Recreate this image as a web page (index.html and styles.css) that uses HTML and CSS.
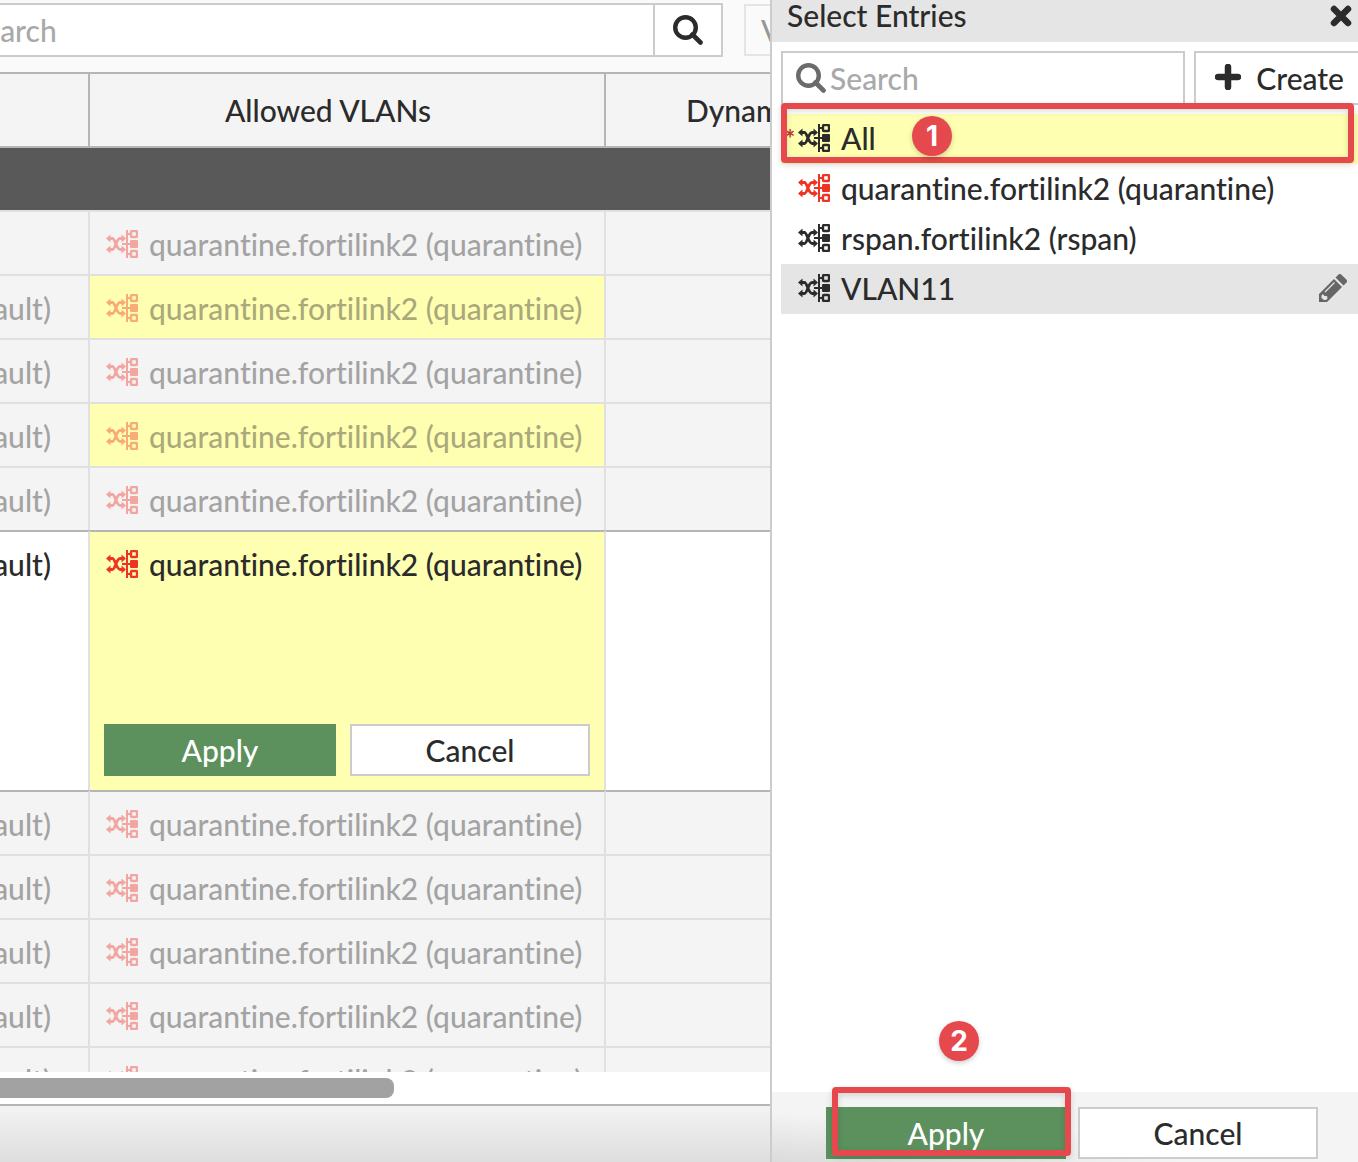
FILE: index.html
```html
<!DOCTYPE html>
<html lang="en">
<head>
    <meta charset="UTF-8">
    <meta name="viewport" content="width=device-width, initial-scale=1.0">
    <title>FortiSwitch Ports</title>
    <link rel="stylesheet" href="styles.css">
</head>
<body>
    <svg class="sprite" aria-hidden="true">
        <symbol id="icon-vlan" viewBox="0 0 32 28">
            <path d="M3 8.500h3.500C9 8.500 10.500 19.500 14 19.500h3M3 19.500h3.500C9 19.500 10.500 8.500 14 8.500h3" fill="none" stroke="currentColor" stroke-width="2.800"/>
            <path d="M0 8.500 4.500 4.500v8zM0 19.500 4.500 15.500v8zM20 8.500 15.500 4.500v8zM20 19.500 15.500 15.500v8z" fill="currentColor"/>
            <path d="M20 0h2v28h-2zM16 13h8v2h-8zM22 3h3v2h-3zM22 23h3v2h-3z" fill="currentColor"/>
            <rect x="25" y="1" width="6" height="6" rx="1" fill="none" stroke="currentColor" stroke-width="2.400"/>
            <rect x="24" y="10" width="8" height="8" rx="1" fill="currentColor"/>
            <rect x="25" y="21" width="6" height="6" rx="1" fill="none" stroke="currentColor" stroke-width="2.400"/>
        </symbol>
        <symbol id="icon-search" viewBox="0 0 30 30">
            <circle cx="12.500" cy="12.500" r="10.300" fill="none" stroke="currentColor" stroke-width="4.400"/>
            <path d="M19.500 19.500 27.500 27.500" stroke="currentColor" stroke-width="4.600" stroke-linecap="round"/>
        </symbol>
    </svg>

    <main class="ports">
        <div class="toolbar">
            <div class="search">
                <input type="text" placeholder="Search" aria-label="Search ports">
                <button type="button" aria-label="Search"><svg class="icon-search"><use href="#icon-search"/></svg></button>
            </div>
            <button type="button" class="view" disabled>View</button>
        </div>

        <div class="table-wrap">
            <table>
                <colgroup>
                    <col class="col-native">
                    <col class="col-allowed">
                    <col>
                </colgroup>
                <thead>
                    <tr>
                        <th></th>
                        <th class="allowed">Allowed VLANs</th>
                        <th class="dynamic">Dynamic VLAN</th>
                    </tr>
                </thead>
                <tbody>
                    <tr class="group"><td colspan="3"></td></tr>
                    <tr>
                        <td></td>
                        <td><div class="vlan"><svg class="icon-vlan"><use href="#icon-vlan"/></svg>quarantine.fortilink2 (quarantine)</div></td>
                        <td></td>
                    </tr>
                    <tr>
                        <td><div class="native">(default)</div></td>
                        <td class="changed"><div class="vlan"><svg class="icon-vlan"><use href="#icon-vlan"/></svg>quarantine.fortilink2 (quarantine)</div></td>
                        <td></td>
                    </tr>
                    <tr>
                        <td><div class="native">(default)</div></td>
                        <td><div class="vlan"><svg class="icon-vlan"><use href="#icon-vlan"/></svg>quarantine.fortilink2 (quarantine)</div></td>
                        <td></td>
                    </tr>
                    <tr>
                        <td><div class="native">(default)</div></td>
                        <td class="changed"><div class="vlan"><svg class="icon-vlan"><use href="#icon-vlan"/></svg>quarantine.fortilink2 (quarantine)</div></td>
                        <td></td>
                    </tr>
                    <tr>
                        <td><div class="native">(default)</div></td>
                        <td><div class="vlan"><svg class="icon-vlan"><use href="#icon-vlan"/></svg>quarantine.fortilink2 (quarantine)</div></td>
                        <td></td>
                    </tr>
                    <tr class="editing">
                        <td><div class="native">(default)</div></td>
                        <td class="changed">
                            <div class="vlan"><svg class="icon-vlan"><use href="#icon-vlan"/></svg>quarantine.fortilink2 (quarantine)</div>
                            <div class="cell-actions">
                                <button type="button" class="btn btn-apply">Apply</button>
                                <button type="button" class="btn btn-cancel">Cancel</button>
                            </div>
                        </td>
                        <td></td>
                    </tr>
                    <tr class="after-editing">
                        <td><div class="native">(default)</div></td>
                        <td><div class="vlan"><svg class="icon-vlan"><use href="#icon-vlan"/></svg>quarantine.fortilink2 (quarantine)</div></td>
                        <td></td>
                    </tr>
                    <tr>
                        <td><div class="native">(default)</div></td>
                        <td><div class="vlan"><svg class="icon-vlan"><use href="#icon-vlan"/></svg>quarantine.fortilink2 (quarantine)</div></td>
                        <td></td>
                    </tr>
                    <tr>
                        <td><div class="native">(default)</div></td>
                        <td><div class="vlan"><svg class="icon-vlan"><use href="#icon-vlan"/></svg>quarantine.fortilink2 (quarantine)</div></td>
                        <td></td>
                    </tr>
                    <tr>
                        <td><div class="native">(default)</div></td>
                        <td><div class="vlan"><svg class="icon-vlan"><use href="#icon-vlan"/></svg>quarantine.fortilink2 (quarantine)</div></td>
                        <td></td>
                    </tr>
                    <tr>
                        <td><div class="native">(default)</div></td>
                        <td><div class="vlan"><svg class="icon-vlan"><use href="#icon-vlan"/></svg>quarantine.fortilink2 (quarantine)</div></td>
                        <td></td>
                    </tr>
                </tbody>
            </table>
        </div>

        <div class="scrollbar"><div class="thumb"></div></div>
        <div class="status-bar"></div>
    </main>

    <aside class="panel">
        <header class="panel-header">
            <h2>Select Entries</h2>
            <button type="button" aria-label="Close">
                <svg class="icon-close" viewBox="0 0 22 22"><path d="M4 4 18 18M18 4 4 18" stroke="currentColor" stroke-width="6.500" stroke-linecap="round"/></svg>
            </button>
        </header>

        <div class="panel-tools">
            <label class="panel-search">
                <svg class="icon-search"><use href="#icon-search"/></svg>
                <input type="text" placeholder="Search" aria-label="Search entries">
            </label>
            <button type="button" class="create">
                <svg class="icon-plus" viewBox="0 0 26 26"><path d="M13 3v20M3 13h20" stroke="currentColor" stroke-width="6.500" stroke-linecap="round"/></svg>
                Create
            </button>
        </div>

        <ul class="entries">
            <li class="all">
                <span class="required">*</span>
                <svg class="icon-vlan"><use href="#icon-vlan"/></svg>All
                <span class="highlight"></span>
                <span class="step">1</span>
            </li>
            <li class="quarantine"><svg class="icon-vlan"><use href="#icon-vlan"/></svg>quarantine.fortilink2 (quarantine)</li>
            <li><svg class="icon-vlan"><use href="#icon-vlan"/></svg>rspan.fortilink2 (rspan)</li>
            <li class="hovered">
                <svg class="icon-vlan"><use href="#icon-vlan"/></svg>VLAN11
                <button type="button" class="edit" aria-label="Edit VLAN11">
                    <svg class="icon-pencil" viewBox="0 0 28 28">
                        <path d="M0 28v-8L15 5l8 8L8 28zM16.500 3.500l2.600-2.600a2.500 2.500 0 0 1 3.600 0l4.400 4.400a2.500 2.500 0 0 1 0 3.600l-2.600 2.600z" fill="currentColor"/>
                        <path d="M6 18 15.500 8.500" stroke="#e5e5e5" stroke-width="1.200"/>
                        <path d="M2.500 21.500 4 20l1.500 2H8l.5 2.500-1.500 1.500H5L2.500 24z" fill="#e5e5e5"/>
                    </svg>
                </button>
            </li>
        </ul>

        <footer class="panel-footer">
            <div class="apply-wrap">
                <button type="button" class="btn btn-apply">Apply</button>
                <span class="highlight"></span>
                <span class="step">2</span>
            </div>
            <button type="button" class="btn btn-cancel">Cancel</button>
        </footer>
    </aside>
</body>
</html>
```
FILE: styles.css
```css
* {
    margin: 0;
    padding: 0;
    box-sizing: border-box;
}

body {
    display: flex;
    height: 100vh;
    overflow: hidden;
    font-family: Lato, sans-serif;
    font-size: 30px;
    font-weight: 500;
    font-variant-ligatures: none;
    color: #2b2b2b;
    background-color: #fff;
}

button,
input {
    font: inherit;
    font-variant-ligatures: none;
    color: inherit;
}

button {
    border: none;
    background: none;
    cursor: pointer;
}

svg {
    display: block;
    flex: none;
}

input::placeholder {
    color: #a9a9a9;
    opacity: 1;
}

input:focus {
    outline: none;
}

.sprite {
    display: none;
}

.icon-vlan {
    width: 32px;
    height: 28px;
}

.icon-search {
    width: 30px;
    height: 30px;
}

.btn {
    height: 52px;
}

.btn-apply {
    background-color: #5c915e;
    color: #fff;
}

.btn-cancel {
    border: 2px solid #ccc;
    background-color: #fff;
}

/* Port list */
.ports {
    flex: 1;
    min-width: 0;
    display: flex;
    flex-direction: column;
    overflow: hidden;
    background-color: #fafafa;
}

.toolbar {
    display: flex;
    gap: 21px;
    padding: 3px 0 15px;
}

.search {
    flex: 1;
    display: flex;
    height: 54px;
    margin-left: -48px;
    border: 2px solid #ccc;
    background-color: #fff;
}

.search input {
    flex: 1;
    min-width: 0;
    padding-left: 14px;
    border: none;
}

.search button {
    display: flex;
    align-items: center;
    justify-content: center;
    width: 68px;
    border-left: 2px solid #ccc;
}

.view {
    width: 120px;
    height: 52px;
    margin: 1px -94px 0 0;
    padding-left: 15px;
    text-align: left;
    border: 2px solid #e2e2e2;
    opacity: 0.9;
    color: #8c8c8c;
}

.table-wrap {
    flex: 1;
    min-height: 0;
    overflow: hidden;
    border-top: 2px solid #b5b5b5;
}

table {
    width: 100%;
    table-layout: fixed;
    border-spacing: 0;
}

.col-native {
    width: 90px;
}

.col-allowed {
    width: 516px;
}

th {
    height: 74px;
    font-weight: inherit;
    text-align: center;
    white-space: nowrap;
    overflow: hidden;
    background-color: #f4f4f4;
    border-right: 2px solid #b5b5b5;
    border-bottom: 2px solid #b5b5b5;
}

th.allowed {
    padding-right: 38px;
}

th.dynamic {
    padding-left: 80px;
    text-align: left;
}

td {
    height: 64px;
    vertical-align: top;
    background-color: #f4f4f4;
    border-top: 2px solid #e0e0e0;
    border-right: 2px solid #e0e0e0;
}

th:last-child,
td:last-child {
    border-right: none;
}

.group td {
    height: 62px;
    border: none;
    background-color: #595959;
}

.changed {
    background-color: #ffffb2;
}

.native,
.vlan {
    display: flex;
    align-items: center;
    height: 62px;
    padding-top: 2px;
    white-space: nowrap;
    opacity: 0.4;
}

.native {
    justify-content: flex-end;
    padding-right: 37px;
    overflow: hidden;
}

.vlan {
    gap: 11px;
    padding-left: 16px;
}

.vlan .icon-vlan {
    color: #ee3524;
}

.editing td {
    background-color: #fff;
    border-top-color: #b5b5b5;
}

.editing .changed {
    background-color: #ffffb2;
}

.editing .native,
.editing .vlan {
    opacity: 1;
}

.after-editing td {
    border-top-color: #b5b5b5;
}

.cell-actions {
    display: grid;
    grid-template-columns: 29fr 30fr;
    gap: 14px;
    padding: 130px 14px 14px;
}

.scrollbar {
    padding: 6px 0;
    height: 32px;
    background-color: #fff;
}

.thumb {
    width: 394px;
    height: 20px;
    border-radius: 0 8px 8px 0;
    background-color: #a2a2a2;
}

.status-bar {
    height: 58px;
    border-top: 2px solid #b5b5b5;
    background: linear-gradient(#f3f3f3, #dedede);
}

/* Entry picker */
.panel {
    flex: none;
    width: 588px;
    display: flex;
    flex-direction: column;
    border-left: 2px solid #ccc;
    background-color: #fff;
}

.panel-header {
    display: flex;
    align-items: flex-start;
    justify-content: space-between;
    height: 42px;
    padding: 0 6px 0 15px;
    background-color: #e5e5e5;
}

.panel-header h2 {
    font-size: 30px;
    font-weight: inherit;
    line-height: 30px;
}

.panel-header button {
    padding-top: 5px;
}

.icon-close {
    width: 22px;
    height: 22px;
}

.panel-tools {
    display: flex;
    gap: 9px;
    padding: 9px 0 9px 9px;
}

.panel-search {
    flex: 1;
    min-width: 0;
    display: flex;
    align-items: center;
    gap: 4px;
    height: 54px;
    padding-left: 13px;
    border: 2px solid #ccc;
}

.panel-search .icon-search {
    color: #6b6b6b;
}

.panel-search input {
    flex: 1;
    min-width: 0;
    border: none;
}

.create {
    display: flex;
    align-items: center;
    gap: 15px;
    height: 54px;
    padding: 0 14px 0 19px;
    border: 2px solid #ccc;
    border-right: none;
}

.icon-plus {
    width: 26px;
    height: 26px;
    margin-bottom: 2px;
}

.entries {
    flex: 1;
    list-style: none;
    padding-left: 9px;
}

.entries li {
    display: flex;
    align-items: center;
    gap: 11px;
    height: 50px;
    padding: 0 0 2px 17px;
}

.entries .all {
    position: relative;
    background-color: #ffffb2;
}

.required {
    position: absolute;
    left: 4px;
    top: 10px;
    font-size: 24px;
    font-weight: 700;
    color: #c0392b;
}

.quarantine .icon-vlan {
    color: #ee3524;
}

.entries .hovered {
    background-color: #e5e5e5;
}

.edit {
    margin-left: auto;
    padding-right: 11px;
    color: #666;
}

.icon-pencil {
    width: 28px;
    height: 28px;
}

.panel-footer {
    display: flex;
    justify-content: flex-end;
    gap: 12px;
    padding: 15px 40px 3px;
    background: radial-gradient(ellipse at bottom left, rgba(0, 0, 0, 0.1), transparent 50%) #f4f4f4;
}

.apply-wrap {
    position: relative;
}

.panel-footer .btn {
    width: 240px;
}

/* Walkthrough markers */
.highlight {
    position: absolute;
    border: 6px solid #e5484d;
    border-radius: 4px;
    box-shadow: 0 2px 6px rgba(0, 0, 0, 0.15), inset 0 2px 6px rgba(0, 0, 0, 0.15);
    pointer-events: none;
}

.step {
    position: absolute;
    width: 40px;
    height: 40px;
    border-radius: 50%;
    background-color: #e5484d;
    box-shadow: 0 2px 5px rgba(0, 0, 0, 0.2);
    color: #fff;
    font-family: Inter, sans-serif;
    font-size: 28px;
    font-weight: 700;
    line-height: 40px;
    text-align: center;
}

.all .highlight {
    top: -11px;
    right: 4px;
    bottom: 1px;
    left: 0;
}

.all .step {
    top: 2px;
    left: 131px;
}

.apply-wrap .highlight {
    top: -20px;
    right: -5px;
    bottom: 3px;
    left: 6px;
}

.apply-wrap .step {
    top: -86px;
    left: 113px;
}
```
